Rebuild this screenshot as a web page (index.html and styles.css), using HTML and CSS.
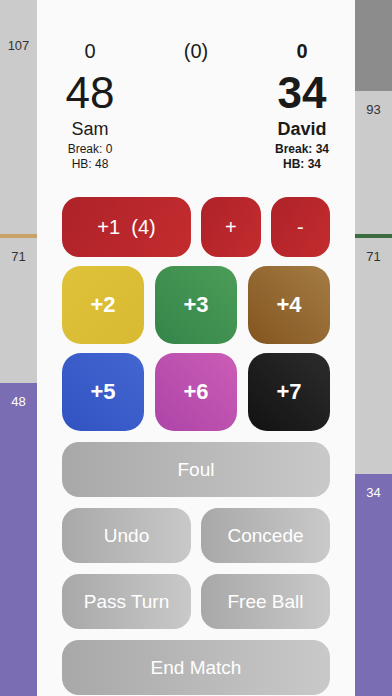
FILE: index.html
```html
<!DOCTYPE html>
<html>
<head>
  <title>Snooker Scoreboard</title>
  <link rel="stylesheet" href="styles.css">
</head>
<body>
  <div class="screen">
    <div class="side">
      <div class="seg light first" style="height: 234px">107</div>
      <div class="line tan"></div>
      <div class="seg light" style="height: 145px">71</div>
      <div class="seg purple" style="flex: 1">48</div>
    </div>

    <div class="panel">
      <div class="header">
        <div class="player">
          <div class="frames">0</div>
          <div class="score">48</div>
          <div class="name">Sam</div>
          <div class="stat">Break: 0</div>
          <div class="stat">HB: 48</div>
        </div>
        <div class="player">
          <div class="frames">(0)</div>
        </div>
        <div class="player active">
          <div class="frames">0</div>
          <div class="score">34</div>
          <div class="name">David</div>
          <div class="stat">Break: 34</div>
          <div class="stat">HB: 34</div>
        </div>
      </div>

      <div class="pots">
        <div class="row reds">
          <button class="btn red wide">+1&nbsp;&nbsp;(4)</button>
          <button class="btn red">+</button>
          <button class="btn red">-</button>
        </div>
        <div class="row colours">
          <button class="btn ball yellow">+2</button>
          <button class="btn ball green">+3</button>
          <button class="btn ball brown">+4</button>
        </div>
        <div class="row colours">
          <button class="btn ball blue">+5</button>
          <button class="btn ball pink">+6</button>
          <button class="btn ball black">+7</button>
        </div>
      </div>

      <div class="actions">
        <button class="btn grey">Foul</button>
        <div class="row pair">
          <button class="btn grey">Undo</button>
          <button class="btn grey">Concede</button>
        </div>
        <div class="row pair">
          <button class="btn grey">Pass Turn</button>
          <button class="btn grey">Free Ball</button>
        </div>
        <button class="btn grey">End Match</button>
      </div>
    </div>

    <div class="side">
      <div class="seg dark" style="height: 91px"></div>
      <div class="seg light" style="height: 143px">93</div>
      <div class="line green-line"></div>
      <div class="seg light" style="height: 236px">71</div>
      <div class="seg purple" style="flex: 1">34</div>
    </div>
  </div>
</body>
</html>
```

FILE: styles.css
```css
body {
  margin: 0;
  font-family: "Liberation Sans", Arial, sans-serif;
  background: #fafafa;
}
.screen {
  display: flex;
  width: 392px;
  height: 696px;
  overflow: hidden;
}
.side {
  width: 37px;
  display: flex;
  flex-direction: column;
}
.seg {
  box-sizing: border-box;
  padding-top: 11px;
  text-align: center;
  font-size: 13px;
  line-height: 15px;
  color: #333;
}
.seg.first {
  padding-top: 38px;
}
.light {
  background: #cbcbcb;
}
.dark {
  background: #8c8c8c;
}
.purple {
  background: #7b6db4;
  color: #fff;
}
.line {
  height: 4px;
}
.tan {
  background: #c9a265;
}
.green-line {
  background: #3d6b40;
}
.panel {
  width: 318px;
  background: #fafafa;
  display: flex;
  flex-direction: column;
}
.header {
  display: grid;
  grid-template-columns: repeat(3, 1fr);
  height: 197px;
  box-sizing: border-box;
  padding-top: 39px;
  color: #1a1a1a;
  text-align: center;
}
.frames {
  font-size: 20px;
  line-height: 24px;
}
.score {
  font-size: 44px;
  line-height: 48px;
  margin-top: 6px;
}
.name {
  font-size: 18px;
  line-height: 22px;
  margin-top: 1px;
}
.stat {
  font-size: 12px;
  line-height: 15px;
}
.name + .stat {
  margin-top: 2px;
}
.active {
  font-weight: bold;
}
.pots {
  display: flex;
  flex-direction: column;
  gap: 9px;
  padding: 0 25px;
}
.actions {
  display: flex;
  flex-direction: column;
  gap: 11px;
  padding: 0 25px;
  margin-top: 11px;
}
.row {
  display: flex;
  gap: 10px;
}
.row.colours {
  gap: 11px;
}
.btn {
  border: none;
  margin: 0;
  padding: 0;
  color: #fff;
  font-family: inherit;
  font-size: 20px;
  border-radius: 17px;
}
.row .btn {
  flex: 1;
}
.reds .btn {
  height: 60px;
}
.reds .wide {
  flex: 0 0 129px;
}
.red {
  background: linear-gradient(120deg, #ad2228, #c42c2f);
}
.ball {
  height: 78px;
  font-size: 22px;
  font-weight: bold;
  border-radius: 19px;
}
.yellow {
  background: linear-gradient(135deg, #dfc13a, #d8ba32);
}
.green {
  background: linear-gradient(45deg, #35854a, #4b9d57);
}
.brown {
  background: linear-gradient(45deg, #83551f, #a57c45);
}
.blue {
  background: linear-gradient(45deg, #3053c2, #4366d1);
}
.pink {
  background: linear-gradient(45deg, #ad44a7, #cc5db7);
}
.black {
  background: linear-gradient(45deg, #121212, #2c2c2c);
}
.grey {
  height: 55px;
  flex: none;
  font-size: 19px;
  background: linear-gradient(90deg, #a8a8a8, #c9c9c9);
}
```
